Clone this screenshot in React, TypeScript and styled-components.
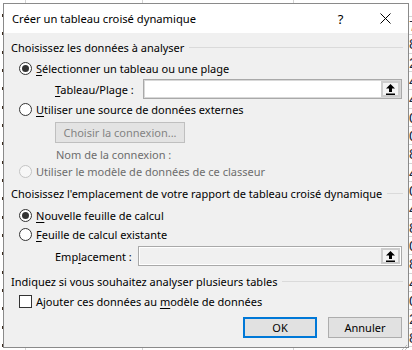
import styled, { createGlobalStyle } from 'styled-components';

const GlobalStyle = createGlobalStyle`
  html, body {
    margin: 0;
    padding: 0;
  }
  body {
    width: 412px;
    height: 350px;
    overflow: hidden;
    background: #ffffff;
    font-family: 'Noto Sans', 'Open Sans', sans-serif;
    color: #000000;
  }
`;

// chiffres des cellules visibles à droite de la boîte
const rightDigits = ['7', '8', '2', '4', '4', '0', '0', '8', '4', '0', '4', '8', '0', '8', '4', '0', '2', '8', '6'];

const UploadIcon = () => (
  <svg width="9" height="11" viewBox="0 0 9 11">
    <path d="M4.5 0 L9 4.5 H6 V8 H3 V4.5 H0 Z" fill="#000" />
    <rect x="0" y="9.5" width="9" height="1.5" fill="#000" />
  </svg>
);

const CloseIcon = () => (
  <svg width="11" height="11" viewBox="0 0 11 11">
    <path d="M0.5 0.5 L10.5 10.5 M10.5 0.5 L0.5 10.5" stroke="#000" strokeWidth="1" />
  </svg>
);

const Grip = () => (
  <svg width="10" height="10" viewBox="0 0 10 10">
    <path d="M9 1 L1 9 M9 4 L4 9 M9 7 L7 9" stroke="#a0a0a0" strokeWidth="1" strokeDasharray="1 1" />
  </svg>
);

const App = () => {
  return (
    <>
      <GlobalStyle />
      <Sheet>
        <LeftStrip />
        <Dialog>
          <TitleBar>
            <Title>Créer un tableau croisé dynamique</Title>
            <TitleButton>?</TitleButton>
            <TitleButton>
              <CloseIcon />
            </TitleButton>
          </TitleBar>

          <Body>
            <SectionHeader $mt={5}>
              <span>Choisissez les données à analyser</span>
            </SectionHeader>

            <Row $mt={2} $h={20} $indent={8}>
              <Radio $checked />
              <Label>
                <Key>S</Key>électionner un tableau ou une plage
              </Label>
            </Row>
            <Row $mt={1} $h={20} $indent={44}>
              <FieldLabel $w={88}>
                <Key>T</Key>ableau/Plage :
              </FieldLabel>
              <Field>
                <PickButton>
                  <UploadIcon />
                </PickButton>
              </Field>
            </Row>
            <Row $mt={1} $h={18} $indent={8}>
              <Radio />
              <Label>
                <Key>U</Key>tiliser une source de données externes
              </Label>
            </Row>
            <Row $mt={4} $h={21} $indent={44}>
              <PushButton $disabled $w={130}>Choisir la connexion...</PushButton>
            </Row>
            <Row $mt={3} $h={16} $indent={45}>
              <Label $disabled>Nom de la connexion :</Label>
            </Row>
            <Row $mt={0} $h={18} $indent={8}>
              <Radio $disabled />
              <Label $disabled>Utiliser le modèle de données de ce classeur</Label>
            </Row>

            <SectionHeader $mt={4}>
              <span>Choisissez l'emplacement de votre rapport de tableau croisé dynamique</span>
            </SectionHeader>

            <Row $mt={4} $h={18} $indent={8}>
              <Radio $checked />
              <Label>
                <Key>N</Key>ouvelle feuille de calcul
              </Label>
            </Row>
            <Row $mt={1} $h={18} $indent={8}>
              <Radio />
              <Label>
                <Key>F</Key>euille de calcul existante
              </Label>
            </Row>
            <Row $mt={3} $h={20} $indent={44}>
              <FieldLabel $w={83}>
                Emp<Key>l</Key>acement :
              </FieldLabel>
              <Field $disabled>
                <PickButton>
                  <UploadIcon />
                </PickButton>
              </Field>
            </Row>

            <SectionHeader $mt={6}>
              <span>Indiquez si vous souhaitez analyser plusieurs tables</span>
            </SectionHeader>

            <Row $mt={2} $h={18} $indent={8}>
              <Checkbox />
              <Label>
                Ajouter ces données au <Key>m</Key>odèle de données
              </Label>
            </Row>

            <ButtonRow>
              <PushButton $default $w={74}>OK</PushButton>
              <PushButton $w={74}>Annuler</PushButton>
            </ButtonRow>
          </Body>

          <GripCorner>
            <Grip />
          </GripCorner>
        </Dialog>
        <RightStrip>
          {rightDigits.map((d, i) => (
            <Cell key={i}>{d}</Cell>
          ))}
        </RightStrip>
      </Sheet>
    </>
  );
};

export default App;

// ############### styles ###############

const Sheet = styled.div`
  width: 412px;
  height: 350px;
  display: flex;
  background-color: #ffffff;
  background-image: linear-gradient(#d4d4d4, #d4d4d4), linear-gradient(#d4d4d4, #d4d4d4),
    linear-gradient(#d4d4d4, #d4d4d4);
  background-size: 1px 100%;
  background-repeat: no-repeat;
  background-position: 25px 0, 142px 0, 293px 0;
`;

const LeftStrip = styled.div`
  width: 3px;
  flex-shrink: 0;
  background-image: linear-gradient(#3b2b1e, #3b2b1e);
  background-size: 1px 3px;
  background-repeat: repeat-y;
  background-position: 2px 13px;
  background-size: 1px 18.33px;
  -webkit-mask-image: repeating-linear-gradient(to bottom, transparent 0 14px, #000 14px 17px, transparent 17px 18.33px);
  mask-image: repeating-linear-gradient(to bottom, transparent 0 14px, #000 14px 17px, transparent 17px 18.33px);
`;

const RightStrip = styled.div`
  width: 3px;
  flex-shrink: 0;
  overflow: hidden;
  padding-top: 16px;
  box-sizing: border-box;
`;

const Cell = styled.div`
  height: 18.33px;
  box-sizing: border-box;
  border-top: 1px solid #d4d4d4;
  font-family: 'Liberation Sans', sans-serif;
  font-size: 15px;
  line-height: 17px;
  color: #1b2a3a;
  white-space: nowrap;
`;

const Dialog = styled.div`
  position: relative;
  width: 406px;
  height: 345px;
  margin-top: 3px;
  box-sizing: border-box;
  border: 1px solid #8a8a8a;
  background: #f0f0f0;
  display: flex;
  flex-direction: column;
  flex-shrink: 0;
`;

const TitleBar = styled.div`
  height: 29px;
  background: #ffffff;
  display: flex;
  align-items: center;
  padding-left: 8px;
  flex-shrink: 0;
`;

const Title = styled.div`
  flex: 1;
  font-size: 11.2px;
  line-height: 29px;
`;

const TitleButton = styled.div`
  width: 45px;
  height: 29px;
  display: flex;
  align-items: center;
  justify-content: center;
  font-size: 13px;
`;

const Body = styled.div`
  flex: 1;
  display: flex;
  flex-direction: column;
  padding: 0 5px 0 7px;
  font-size: 11px;
`;

const SectionHeader = styled.div<{ $mt: number }>`
  margin-top: ${(p) => p.$mt}px;
  height: 18px;
  display: flex;
  align-items: center;
  gap: 5px;
  white-space: nowrap;
  &::after {
    content: '';
    flex: 1;
    height: 1px;
    background: #dadada;
    margin-top: 1px;
  }
`;

const Row = styled.div<{ $mt: number; $h: number; $indent: number }>`
  margin-top: ${(p) => p.$mt}px;
  height: ${(p) => p.$h}px;
  padding-left: ${(p) => p.$indent}px;
  margin-right: 1px;
  display: flex;
  align-items: center;
  white-space: nowrap;
`;

const Radio = styled.span<{ $checked?: boolean; $disabled?: boolean }>`
  width: 13px;
  height: 13px;
  box-sizing: border-box;
  border-radius: 50%;
  border: 1px solid ${(p) => (p.$disabled ? '#c4c4c4' : '#333333')};
  background: ${(p) => (p.$disabled ? '#f7f7f7' : '#ffffff')};
  margin-right: 4px;
  display: flex;
  align-items: center;
  justify-content: center;
  flex-shrink: 0;
  &::after {
    content: '';
    display: ${(p) => (p.$checked ? 'block' : 'none')};
    width: 7px;
    height: 7px;
    border-radius: 50%;
    background: #333333;
  }
`;

const Checkbox = styled.span`
  width: 13px;
  height: 13px;
  box-sizing: border-box;
  border: 1px solid #333333;
  background: #ffffff;
  margin-right: 4px;
  flex-shrink: 0;
`;

const Label = styled.span<{ $disabled?: boolean }>`
  color: ${(p) => (p.$disabled ? '#6d6d6d' : '#000000')};
`;

const Key = styled.span`
  text-decoration: underline;
  text-underline-offset: 2px;
`;

const FieldLabel = styled.span<{ $w: number }>`
  width: ${(p) => p.$w}px;
  flex-shrink: 0;
`;

const Field = styled.div<{ $disabled?: boolean }>`
  flex: 1;
  height: 100%;
  box-sizing: border-box;
  border: 1px solid #a9a9a9;
  background: ${(p) => (p.$disabled ? '#f0f0f0' : '#ffffff')};
  box-shadow: inset 0 0 0 1px ${(p) => (p.$disabled ? '#ffffff' : '#d8d8d8')};
  display: flex;
  align-items: center;
  justify-content: flex-end;
  padding-right: 1px;
`;

const PickButton = styled.div`
  width: 19px;
  height: 16px;
  box-sizing: border-box;
  border: 2px solid #cdcdcd;
  background: #f4f4f4;
  display: flex;
  align-items: center;
  justify-content: center;
`;

const PushButton = styled.div<{ $w: number; $disabled?: boolean; $default?: boolean }>`
  width: ${(p) => p.$w}px;
  height: 21px;
  box-sizing: border-box;
  display: flex;
  align-items: center;
  justify-content: center;
  background: ${(p) => (p.$disabled ? '#e3e3e3' : '#e1e1e1')};
  color: ${(p) => (p.$disabled ? '#838383' : '#000000')};
  border: ${(p) =>
    p.$default ? '2px solid #0078d7' : p.$disabled ? '1px solid #bfbfbf' : '1px solid #adadad'};
`;

const ButtonRow = styled.div`
  margin-top: 7px;
  margin-right: 1px;
  display: flex;
  justify-content: flex-end;
  gap: 11px;
`;

const GripCorner = styled.div`
  position: absolute;
  right: 0;
  bottom: 0;
  width: 10px;
  height: 10px;
`;
